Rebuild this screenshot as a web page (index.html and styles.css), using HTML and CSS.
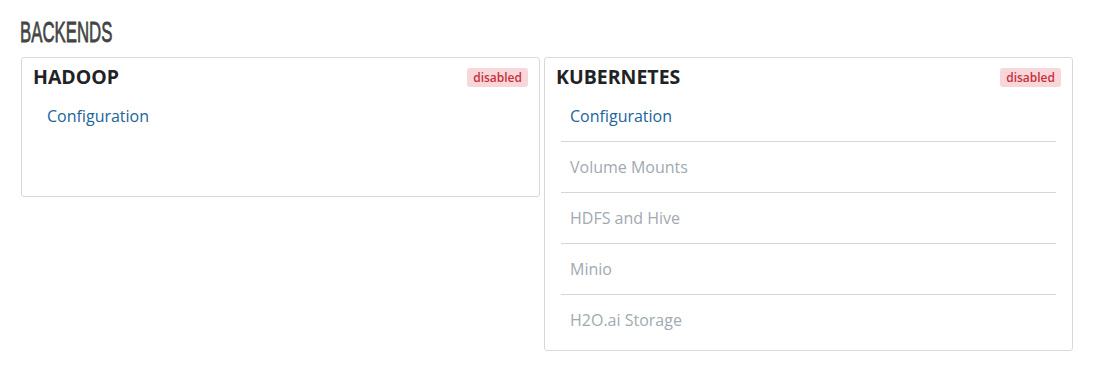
FILE: index.html
```html
<!DOCTYPE html>
<html lang="en">
<head>
<meta charset="utf-8">
<title>Backends</title>
<link rel="stylesheet" href="styles.css">
</head>
<body>
<div class="page">
  <h2 class="section-title"><span class="squash">BACKENDS</span></h2>
  <div class="panels">
    <section class="panel panel-hadoop">
      <header class="panel-head">
        <h3 class="panel-title">HADOOP</h3>
        <span class="badge">disabled</span>
      </header>
      <ul class="nav-list">
        <li class="nav-item"><a class="nav-link active" href="#">Configuration</a></li>
      </ul>
    </section>
    <section class="panel panel-k8s">
      <header class="panel-head">
        <h3 class="panel-title">KUBERNETES</h3>
        <span class="badge">disabled</span>
      </header>
      <ul class="nav-list">
        <li class="nav-item"><a class="nav-link active" href="#">Configuration</a></li>
        <li class="nav-item"><span class="nav-link muted">Volume Mounts</span></li>
        <li class="nav-item"><span class="nav-link muted">HDFS and Hive</span></li>
        <li class="nav-item"><span class="nav-link muted">Minio</span></li>
        <li class="nav-item"><span class="nav-link muted">H2O.ai Storage</span></li>
      </ul>
    </section>
  </div>
</div>
</body>
</html>
```

FILE: styles.css
```css
html, body {
  margin: 0;
  padding: 0;
  background: #ffffff;
}
body {
  font-family: "Open Sans", "Liberation Sans", sans-serif;
  color: #222;
}
.page {
  padding: 15px 0 0 20px;
}
.section-title {
  margin: 0 0 9px 0;
  font-family: "Liberation Sans", Arial, sans-serif;
  font-weight: 400;
  font-size: 30px;
  line-height: 33px;
  height: 33px;
  color: #444;
  letter-spacing: 0;
}
.squash {
  display: inline-block;
  transform: scaleX(0.56);
  transform-origin: left center;
  -webkit-text-stroke: 0.8px #444;
}
.panels {
  display: flex;
  align-items: flex-start;
  gap: 4px;
  margin-left: 1px;
}
.panel {
  box-sizing: border-box;
  border: 1px solid #d9d9d9;
  border-radius: 3px;
  padding-bottom: 5px;
  background: #fff;
}
.panel-hadoop {
  width: 519px;
  min-height: 140px;
}
.panel-k8s {
  width: 529px;
}
.panel-head {
  display: flex;
  justify-content: space-between;
  align-items: center;
  height: 33px;
  padding: 4px 11px 0 11px;
  box-sizing: border-box;
}
.panel-title {
  margin: 0;
  font-size: 19.5px;
  font-weight: 700;
  line-height: 26px;
  color: #1f2326;
}
.badge {
  display: inline-block;
  height: 19px;
  line-height: 19px;
  padding: 0 6px;
  border-radius: 3px;
  background: #f8d7da;
  color: #c9303a;
  font-size: 12px;
  font-weight: 600;
  margin-top: 1px;
}
.nav-list {
  list-style: none;
  margin: 0 16px;
  padding: 0;
}
.nav-item {
  border-bottom: 1px solid #d6d6d6;
}
.nav-item:last-child {
  border-bottom: none;
}
.nav-link {
  display: block;
  padding: 13px 9px;
  font-size: 16px;
  line-height: 24px;
  text-decoration: none;
}
.nav-link.active {
  color: #21649b;
}
.nav-link.muted {
  color: #a1a9b1;
}
```
